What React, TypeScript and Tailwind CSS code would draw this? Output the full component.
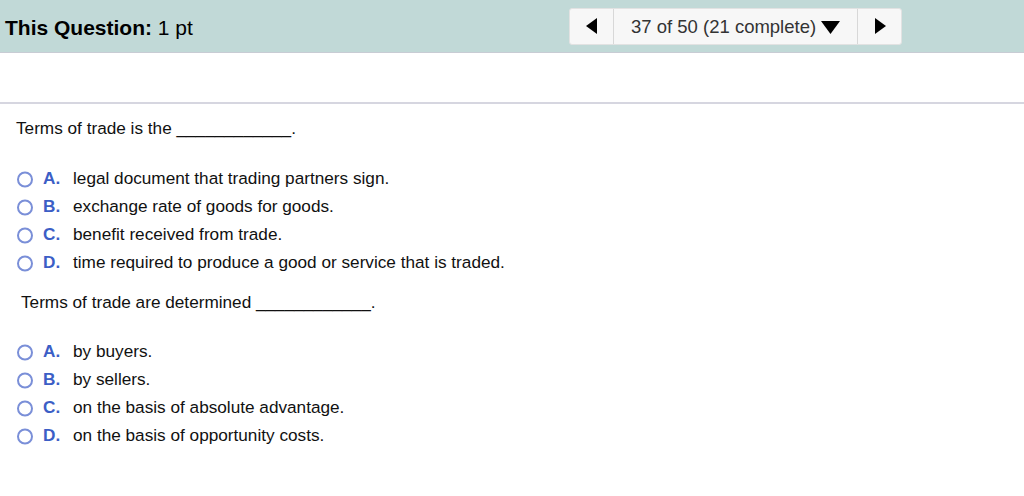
import React from "react";

const font = { fontFamily: '"Liberation Sans", Arial, sans-serif' };

function Radio() {
  return (
    <svg width="17" height="17" viewBox="0 0 17 17" className="shrink-0">
      <circle cx="8" cy="8.5" r="7" fill="white" stroke="#7a8fd8" strokeWidth="2" />
    </svg>
  );
}

function Option({ letter, text }: { letter: string; text: string }) {
  return (
    <div className="flex items-center h-[28px]">
      <Radio />
      <span className="ml-[9px] w-[30px] font-bold text-[#3c5ec6]">{letter}.</span>
      <span className="text-[#111]">{text}</span>
    </div>
  );
}

export default function App() {
  return (
    <div className="w-[1024px] h-[496px] bg-white text-[17.2px]" style={font}>
      <div className="h-[53px] bg-[#c1d9d7] border-b border-[#c8ccd4] flex items-center pl-[5px] pr-[122px] justify-between">
        <div className="text-[21px] text-black pt-[3px]">
          <span className="font-bold">This Question:</span> 1 pt
        </div>
        <div className="flex h-[37px] bg-[#f7f7f7] border border-[#e2e2e2] rounded-[3px]">
          <div className="w-[44px] flex items-center justify-center border-r border-[#d8d8d8]">
            <svg width="12" height="16" viewBox="0 0 12 16"><path d="M11 0V16L0 8Z" fill="#000" /></svg>
          </div>
          <div className="w-[243px] flex items-center pl-[17px] text-[18.5px] text-[#333] gap-[5px] pt-[2px]">
            <span>37 of 50 (21 complete)</span>
            <svg width="19" height="13" viewBox="0 0 19 13"><path d="M0 0H19L9.5 13Z" fill="#000" /></svg>
          </div>
          <div className="w-[44px] flex items-center justify-center border-l border-[#d8d8d8]">
            <svg width="12" height="16" viewBox="0 0 12 16"><path d="M1 0V16L12 8Z" fill="#000" /></svg>
          </div>
        </div>
      </div>
      <div className="h-[51px] border-b-2 border-[#d6d6e0]" />
      <div className="pl-[16px] pt-[14px]">
        <div className="text-[#111] h-[20px] leading-[20px]">Terms of trade is the ____________.</div>
        <div className="mt-[27px] pl-[1px]">
          <Option letter="A" text="legal document that trading partners sign." />
          <Option letter="B" text="exchange rate of goods for goods." />
          <Option letter="C" text="benefit received from trade." />
          <Option letter="D" text="time required to produce a good or service that is traded." />
        </div>
        <div className="text-[#111] h-[20px] leading-[20px] mt-[15px] pl-[5px]">Terms of trade are determined ____________.</div>
        <div className="mt-[26px] pl-[1px]">
          <Option letter="A" text="by buyers." />
          <Option letter="B" text="by sellers." />
          <Option letter="C" text="on the basis of absolute advantage." />
          <Option letter="D" text="on the basis of opportunity costs." />
        </div>
      </div>
    </div>
  );
}
